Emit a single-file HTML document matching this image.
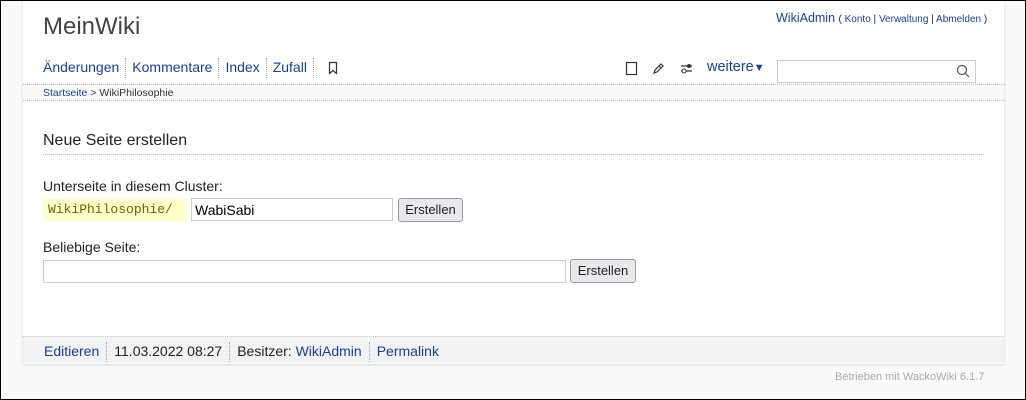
<!DOCTYPE html>
<html><head><meta charset="utf-8"><style>
*{margin:0;padding:0;box-sizing:border-box}
html,body{width:1026px;height:400px;overflow:hidden}
body{background:#fafafa;font-family:"Liberation Sans",sans-serif;color:#222;position:relative}
.frame{position:absolute;left:0;top:0;width:1026px;height:400px;border:1px solid #000;z-index:9;pointer-events:none}
.a{position:absolute;white-space:nowrap}
a{color:#1c3f94;text-decoration:none}
.card{position:absolute;left:23px;top:0;width:981px;height:364px;background:#fff;box-shadow:0 1px 3px rgba(0,0,0,.15)}
.dot{position:absolute;border-top:1px dotted #bbb;height:0}
.sep{display:inline-block;border-left:1px dotted #aaa;height:20px;vertical-align:middle;margin:0 6px}
.f .sep{margin:0 7px}
input{position:absolute;border:1px solid #ccc;background:#fff;font:14px "Liberation Sans",sans-serif;padding:0 3px}
.btn{position:absolute;border:1px solid #999;border-radius:3px;background:#e9e9ed;font-size:13px;text-align:center;line-height:22px;color:#222}
</style></head><body>
<div class="frame"></div>
<div class="card"></div>
<div class="a" style="left:43px;top:13px;font-size:24px;color:#444">MeinWiki</div>
<div class="a" style="left:776px;top:11px;font-size:12.5px"><a>WikiAdmin</a> <span style="font-size:10px">( <a>Konto</a> | <a>Verwaltung</a> | <a>Abmelden</a> )</span></div>
<div class="a" style="left:43px;top:57px;font-size:14px;line-height:20px"><a>Änderungen</a><span class="sep"></span><a>Kommentare</a><span class="sep"></span><a>Index</a><span class="sep"></span><a>Zufall</a><span class="sep"></span>
<svg width="12" height="14" style="vertical-align:middle;margin-left:3px"><path d="M2.5 1.5h7v11l-3.5-3-3.5 3z" fill="none" stroke="#333" stroke-width="1.2"/></svg></div>
<svg class="a" style="left:624px;top:61px" width="90" height="16"><rect x="2.5" y="1.5" width="10" height="12" fill="none" stroke="#333" stroke-width="1.2"/>
<path d="M30 12l1-3 6-6 2 2-6 6z" fill="none" stroke="#333" stroke-width="1.2"/><path d="M35 5l2 2" stroke="#333"/>
<path d="M57 5h11M57 10h11" stroke="#333" stroke-width="1.2"/><circle cx="65" cy="5" r="2" fill="#333"/><circle cx="60" cy="10" r="2" fill="#fff" stroke="#333"/></svg>
<div class="a" style="left:707px;top:59px;font-size:14.5px"><a>weitere<span style="font-size:11px">▼</span></a></div>
<div class="a" style="left:777px;top:60px;width:199px;height:23px;border:1px solid #ccc;background:#fff"></div>
<svg class="a" style="left:956px;top:64px" width="14" height="14"><circle cx="6" cy="6" r="4.5" fill="none" stroke="#555" stroke-width="1.2"/><path d="M9.5 9.5l3.5 3.5" stroke="#555" stroke-width="1.2"/></svg>
<div class="dot" style="left:23px;top:84px;width:981px"></div>
<div class="a" style="left:23px;top:85px;width:981px;height:15px;background:#fafafa"></div>
<div class="a" style="left:43px;top:87px;font-size:10.5px;color:#333"><a>Startseite</a> &gt; WikiPhilosophie</div>
<div class="dot" style="left:23px;top:100px;width:981px"></div>
<div class="a" style="left:43px;top:132px;font-size:16px;color:#222">Neue Seite erstellen</div>
<div class="dot" style="left:43px;top:154px;width:941px"></div>
<div class="a" style="left:43px;top:178px;font-size:14px">Unterseite in diesem Cluster:</div>
<div class="a" style="left:43px;top:199px;width:143px;height:22px;background:#ffffcc;font-family:'Liberation Mono',monospace;font-size:13px;color:#666600;line-height:22px;padding-left:5px">WikiPhilosophie/</div>
<input style="left:191px;top:198px;width:202px;height:23px" value="WabiSabi">
<div class="btn" style="left:398px;top:198px;width:65px;height:24px">Erstellen</div>
<div class="a" style="left:43px;top:239px;font-size:14px">Beliebige Seite:</div>
<input style="left:43px;top:260px;width:523px;height:23px">
<div class="btn" style="left:570px;top:259px;width:66px;height:24px">Erstellen</div>
<div class="a" style="left:23px;top:336px;width:981px;height:27px;background:#f0f2f3;border-top:1px dotted #ccc"></div>
<div class="a f" style="left:44px;top:341px;font-size:14px;line-height:20px"><a>Editieren</a><span class="sep"></span>11.03.2022 08:27<span class="sep"></span>Besitzer: <a>WikiAdmin</a><span class="sep"></span><a>Permalink</a></div>
<div class="a" style="left:835px;top:371px;font-size:11px;color:#aaa">Betrieben mit WackoWiki 6.1.7</div>
</body></html>
